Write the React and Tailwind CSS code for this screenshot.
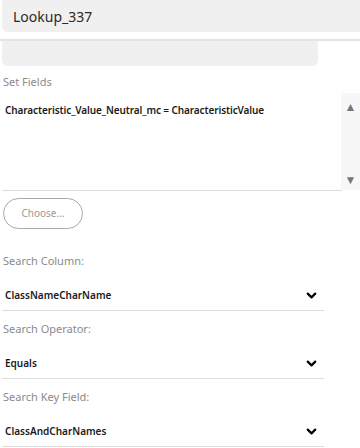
import { ChevronDown } from "lucide-react";

const fields = [
  { label: "Search Column:", value: "ClassNameCharName" },
  { label: "Search Operator:", value: "Equals" },
  { label: "Search Key Field:", value: "ClassAndCharNames" },
];

const Select = ({ label, value, first }) => (
  <div className={first ? "mt-[25px]" : "mt-[11px]"}>
    <p className="text-[11px] leading-[14px] text-[#8a8a8a] pl-[3px]">{label}</p>
    <div className="mt-[19px] flex items-center justify-between w-[322px] ml-[2px] h-[16px] pl-[3px] pr-[5px]">
      <span className="text-[10px] font-semibold text-[#1a1a1a]">{value}</span>
      <ChevronDown size={15} strokeWidth={3.5} className="text-black" />
    </div>
    <div className="mt-[7px] ml-[2px] w-[322px] h-px bg-[#dcdcdc]" />
  </div>
);

const App = () => {
  return (
    <div className="w-[360px] h-[448px] bg-white overflow-hidden" style={{ fontFamily: "'Noto Sans', 'Liberation Sans', sans-serif" }}>
      {/* Header */}
      <div className="ml-[2px] h-[32px] bg-[#f0f0f0] rounded-bl-[6px] flex items-center pl-[11px]">
        <span className="text-[14px] text-[#2a2a2a]">Lookup_337</span>
      </div>
      <div className="mt-[7px] h-[2px] bg-[#e4e4e4]" />
      <div className="ml-[2px] w-[316px] h-[25px] bg-[#f0f0f0] rounded-b-[6px]" />

      {/* Set Fields */}
      <p className="mt-[9px] pl-[3px] text-[11px] leading-[14px] text-[#8a8a8a]">Set Fields</p>
      <div className="mt-[4px] flex w-full h-[97px]">
        <div className="flex-1 pl-[5px] pt-[3px]">
          <span className="text-[10px] font-semibold tracking-[-0.1px] text-[#1a1a1a]">
            Characteristic_Value_Neutral_mc = CharacteristicValue
          </span>
        </div>
        <div className="w-[19px] bg-[#f7f7f7] flex flex-col items-center justify-between pt-[8px] pb-[4px]">
          <span className="text-[12px] leading-none text-[#777]">▲</span>
          <span className="text-[12px] leading-none text-[#777]">▼</span>
        </div>
      </div>
      <div className="ml-[2px] w-[340px] h-px bg-[#dcdcdc]" />

      <button className="mt-[7px] ml-[3px] w-[80px] h-[31px] rounded-full border border-[#a8a8a8] bg-white text-[10px] text-[#9a9a9a]">
        Choose...
      </button>

      {fields.map((f, i) => (
        <Select key={f.label} {...f} first={i === 0} />
      ))}
    </div>
  );
};

export default App;
